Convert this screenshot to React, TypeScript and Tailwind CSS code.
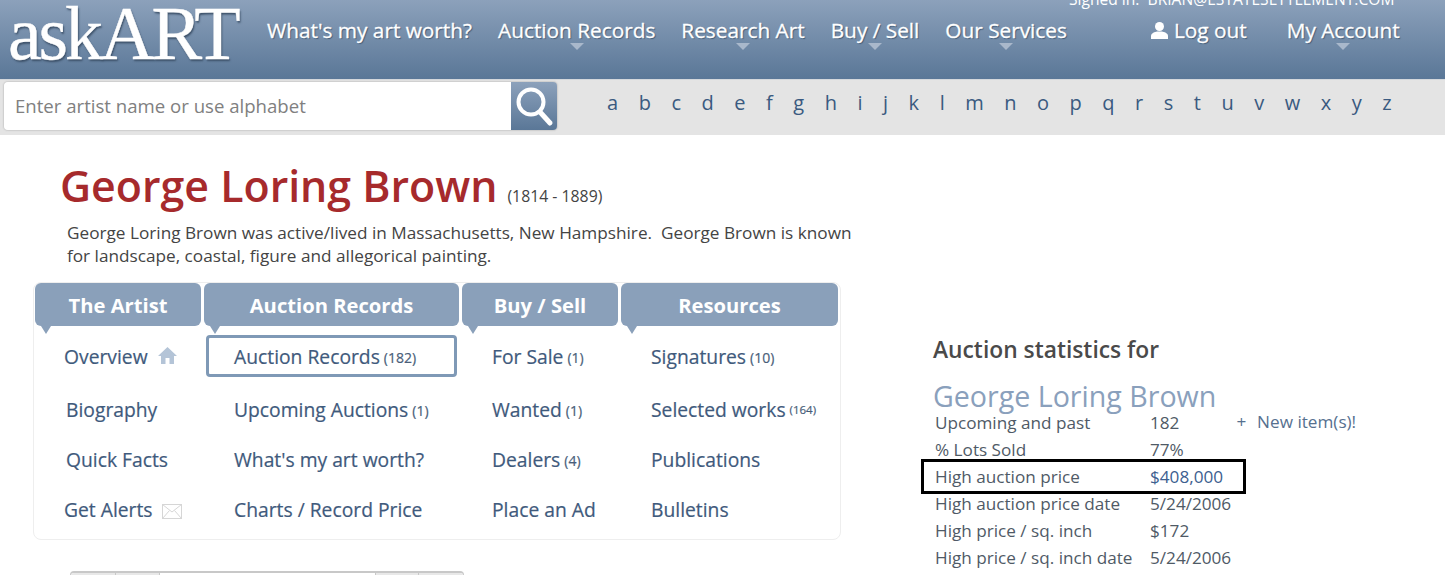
const NAV_LEFT = [
  { label: "What's my art worth?", arrow: false },
  { label: "Auction Records", arrow: true },
  { label: "Research Art", arrow: true },
  { label: "Buy / Sell", arrow: true },
  { label: "Our Services", arrow: true },
];

const LETTERS = "abcdefghijklmnopqrstuvwxyz".split("");

type Item = { label: string; count?: string; small?: boolean; pad?: string; icon?: "home" | "mail"; active?: boolean };

const COLUMNS: { title: string; width: string; items: Item[] }[] = [
  {
    title: "The Artist",
    width: "w-[166px]",
    items: [
      { label: "Overview", pad: "pl-[29px]", icon: "home" },
      { label: "Biography", pad: "pl-[31px]" },
      { label: "Quick Facts", pad: "pl-[31px]" },
      { label: "Get Alerts", pad: "pl-[29px]", icon: "mail" },
    ],
  },
  {
    title: "Auction Records",
    width: "w-[255px]",
    items: [
      { label: "Auction Records", count: "(182)", active: true },
      { label: "Upcoming Auctions", count: "(1)" },
      { label: "What's my art worth?" },
      { label: "Charts / Record Price" },
    ],
  },
  {
    title: "Buy / Sell",
    width: "w-[156px]",
    items: [
      { label: "For Sale", count: "(1)" },
      { label: "Wanted", count: "(1)" },
      { label: "Dealers", count: "(4)" },
      { label: "Place an Ad" },
    ],
  },
  {
    title: "Resources",
    width: "w-[217px]",
    items: [
      { label: "Signatures", count: "(10)" },
      { label: "Selected works", count: "(164)", small: true },
      { label: "Publications" },
      { label: "Bulletins" },
    ],
  },
];

const STATS = [
  { label: "Upcoming and past", value: "182" },
  { label: "% Lots Sold", value: "77%" },
  { label: "High auction price", value: "$408,000", boxed: true },
  { label: "High auction price date", value: "5/24/2006" },
  { label: "High price / sq. inch", value: "$172" },
  { label: "High price / sq. inch date", value: "5/24/2006" },
];

function NavArrow() {
  return <span className="absolute left-1/2 top-[27px] -ml-[7px] h-0 w-0 border-x-[7px] border-t-[7px] border-x-transparent border-t-[#a9b8cb]" />;
}

function HomeIcon() {
  return (
    <svg width="19" height="17" viewBox="0 0 19 17" className="ml-[10px] mb-[3px]">
      <path d="M9.5 0 L19 9 H16 V17 H11.5 V11 H7.5 V17 H3 V9 H0 Z" fill="#b4c4d7" />
    </svg>
  );
}

function MailIcon() {
  return (
    <svg width="20" height="15" viewBox="0 0 20 15" className="ml-[9px] mt-[2px]" fill="none" stroke="#d6d6d6">
      <rect x="0.5" y="0.5" width="19" height="14" />
      <path d="M0.5 0.5 L10 8 L19.5 0.5 M0.5 14.5 L7.5 6.5 M19.5 14.5 L12.5 6.5" />
    </svg>
  );
}

function NavItem({ item }: { item: Item }) {
  return (
    <span className="flex items-center pt-[2px] text-[19.3px] font-medium text-[#3f5a7c] [-webkit-text-stroke:0.2px_#3f5a7c]">
      {item.label}
      {item.count && (
        <span className={`ml-[4px] font-medium text-[#4c5f78] ${item.small ? "text-[11.5px]" : "text-[14px]"}`}>{item.count}</span>
      )}
      {item.icon === "home" && <HomeIcon />}
      {item.icon === "mail" && <MailIcon />}
    </span>
  );
}

export default function App() {
  return (
    <div className="h-[575px] w-[1445px] overflow-hidden bg-white font-['Open_Sans',sans-serif]">
      <header className="flex h-[79px] items-start overflow-hidden bg-gradient-to-b from-[#8ca1bb] to-[#5a7797] pl-[8px] text-white">
        <div className="w-[259px] shrink-0 font-['Liberation_Serif',serif] text-[76px] leading-[66px] tracking-[-3.2px] [-webkit-text-stroke:0.4px_#fff] [text-shadow:1px_2px_2px_#3c5068]">
          askART
        </div>
        <div className="flex flex-1 flex-col">
          <div className="mt-[-9px] h-[16px] pl-[802px] text-[15.6px] leading-[16px] whitespace-nowrap">Signed in:&nbsp; BRIAN@ESTATESETTLEMENT.COM</div>
          <nav className="mt-[9px] flex h-[40px] items-start text-[20.8px] leading-[28px] font-medium [-webkit-text-stroke:0.3px_#fff] [text-shadow:1px_1px_1px_#3f5975]">
            <div className="flex gap-[26px]">
              {NAV_LEFT.map((n) => (
                <span key={n.label} className="relative whitespace-nowrap">
                  {n.label}
                  {n.arrow && <NavArrow />}
                </span>
              ))}
            </div>
            <div className="ml-[84px] flex items-center">
              <svg width="17" height="17" viewBox="0 0 17 17" fill="#fff" className="mr-[6px]">
                <circle cx="8.5" cy="4.5" r="4.5" />
                <path d="M0 17 V14 C0 11 4 10 6 9.5 H11 C13 10 17 11 17 14 V17 Z" />
              </svg>
              Log out
            </div>
            <span className="relative ml-[40px] whitespace-nowrap">
              My Account
              <NavArrow />
            </span>
          </nav>
        </div>
      </header>

      <div className="flex h-[56px] items-start border-t border-[#d4d8dc] bg-[#e4e4e4] pl-[4px]">
        <div className="mt-[2px] flex h-[48px] w-[553px] rounded-[4px] shadow-[0_0_2px_#999]">
          <div className="flex flex-1 items-center rounded-l-[4px] bg-white pb-[1px] pl-[11px] text-[18.6px] text-[#808080]">Enter artist name or use alphabet</div>
          <div className="flex w-[46px] items-center justify-center rounded-r-[4px] bg-gradient-to-b from-[#8ca1bb] to-[#5a7797]">
            <svg width="40" height="42" viewBox="0 0 40 42" fill="none" stroke="#fff">
              <circle cx="17" cy="17" r="12.5" strokeWidth="4" />
              <path d="M26 27 L36 38" strokeWidth="5" strokeLinecap="round" />
            </svg>
          </div>
        </div>
        <div className="ml-[50px] mt-[9px] flex w-[785px] justify-between text-[20px] leading-[28px] text-[#3a5a80]">
          {LETTERS.map((l) => (
            <span key={l}>{l}</span>
          ))}
        </div>
      </div>

      <main className="flex">
        <div className="w-[933px] shrink-0">
          <div className="ml-[60px] mt-[21px] flex items-baseline">
            <h1 className="text-[42.9px] leading-[60px] font-semibold text-[#a62a2c]">George Loring Brown</h1>
            <span className="ml-[10px] text-[15.8px] text-[#444]">(1814 - 1889)</span>
          </div>
          <p className="ml-[67px] mt-[5px] w-[800px] text-[17.2px] leading-[23px] text-[#444]">
            George Loring Brown was active/lived in Massachusetts, New Hampshire.&nbsp; George Brown is known
            <br />
            for landscape, coastal, figure and allegorical painting.
          </p>
          <div className="ml-[33px] mt-[15px] flex h-[258px] w-[808px] gap-[3px] rounded-[8px] border border-[#eeeeee] pl-[1px]">
            {COLUMNS.map((col) => (
              <div key={col.title} className={col.width}>
                <div className="relative flex h-[43px] items-center justify-center rounded-[6px] bg-[#8aa0ba] pt-[2px] text-[20.2px] font-bold text-white">
                  {col.title}
                  <span className="absolute left-[6px] top-[43px] h-0 w-0 border-x-[5px] border-t-[8px] border-x-transparent border-t-[#8aa0ba]" />
                </div>
                <div className="flex flex-col">
                  {col.items.map((item, i) =>
                    item.active ? (
                      <div key={item.label} className="mt-[9px] ml-[2px] flex h-[42px] w-[251px] items-center rounded-[4px] border-[3px] border-[#7f99b6] pl-[25px]">
                        <NavItem item={item} />
                      </div>
                    ) : (
                      <div key={item.label} className={`flex items-center ${item.pad ?? "pl-[30px]"} ${i === 0 ? "mt-[9px] h-[42px]" : i === 1 ? "mt-[7px] h-[50px]" : "h-[50px]"}`}>
                        <NavItem item={item} />
                      </div>
                    ),
                  )}
                </div>
              </div>
            ))}
          </div>
          <div className="ml-[70px] mt-[31px] flex h-[30px] w-[394px] overflow-hidden rounded-t-[4px] border-t-2 border-x border-[#c8c8c8]">
            <div className="w-[45px] border-r border-[#c8c8c8] bg-[#e8e8e8]" />
            <div className="w-[44px] border-r border-[#c8c8c8] bg-[#e8e8e8]" />
            <div className="flex-1 bg-white" />
            <div className="w-[44px] border-x border-[#c8c8c8] bg-[#e8e8e8]" />
            <div className="w-[44px] bg-[#e8e8e8]" />
          </div>
        </div>

        <aside className="pt-[200px]">
          <h2 className="text-[22.8px] leading-[30px] font-semibold text-[#4a4a4a]">Auction statistics for</h2>
          <div className="mt-[18px] text-[28.6px] leading-[26px] text-[#8aa0bc]">George Loring Brown</div>
          <div className="ml-[2px] text-[17.15px] leading-[27px] text-[#4f5a66]">
            {STATS.map((s, i) => (
              <div key={s.label} className="relative flex whitespace-nowrap">
                <span className="w-[215px]">{s.label}</span>
                <span className={s.boxed ? "text-[#3d6090]" : ""}>{s.value}</span>
                {i === 0 && (
                  <span className="ml-[57px] mt-[-1px] text-[#56708f]">
                    <span className="mr-[2px]">+&nbsp;</span> New item(s)!
                  </span>
                )}
                {s.boxed && <span className="absolute left-[-14px] top-[-4px] h-[35px] w-[325px] border-[3px] border-black" />}
              </div>
            ))}
          </div>
        </aside>
      </main>
    </div>
  );
}
